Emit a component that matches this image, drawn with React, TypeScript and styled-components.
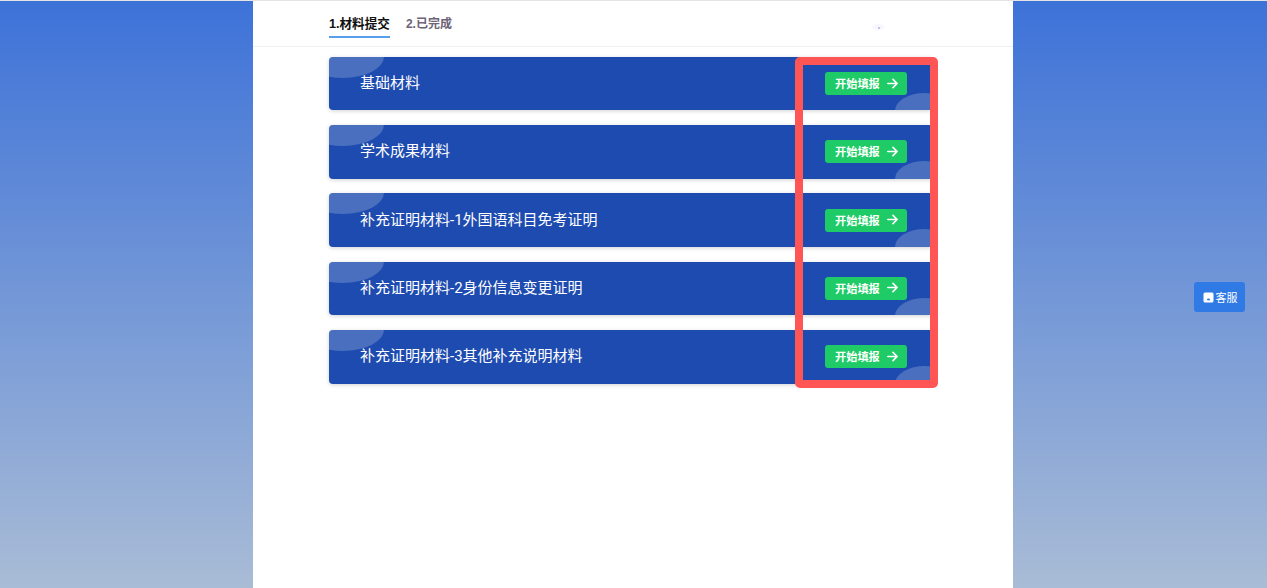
import React from "react";
import styled, { createGlobalStyle } from "styled-components";

const GlobalStyle = createGlobalStyle`
  html, body {
    margin: 0;
    padding: 0;
    height: 100%;
    overflow: hidden;
  }
  #root {
    height: 100%;
  }
`;

const Screen = styled.div`
  position: relative;
  height: 588px;
  box-sizing: border-box;
  border-top: 1px solid #e4e4e4;
  padding-left: 253px;
  background: linear-gradient(180deg, #3d72d8 0%, #a9bcd6 100%);
  font-family: "Liberation Sans", "Noto Sans CJK SC", sans-serif;
  display: flex;
`;

const Page = styled.main`
  width: 760px;
  height: 100%;
  background: #fff;
`;

const Header = styled.header`
  height: 46px;
  box-sizing: border-box;
  padding-left: 76px;
  border-bottom: 1px solid #f0f0f0;
  display: flex;
  gap: 16px;
  position: relative;
`;

const Tab = styled.div<{ $active?: boolean }>`
  height: 37px;
  box-sizing: border-box;
  padding-top: 14px;
  font-size: ${(p) => (p.$active ? "12.6px" : "12px")};
  line-height: 18px;
  font-weight: 700;
  color: ${(p) => (p.$active ? "#111" : "#6c6377")};
  border-bottom: 2px solid ${(p) => (p.$active ? "#5a9fee" : "transparent")};
`;

const Speck = styled.span`
  position: absolute;
  left: 619px;
  top: 23px;
  width: 12px;
  height: 6px;
  border-radius: 50%;
  background: #f9f6fe;

  &::after {
    content: "";
    position: absolute;
    left: 6px;
    top: 3px;
    width: 2px;
    height: 2px;
    background: #b9c6f2;
  }
`;

const List = styled.div`
  position: relative;
  width: 604px;
  margin: 9.8px 0 0 76px;
  display: flex;
  flex-direction: column;
  gap: 14.7px;
`;

const Card = styled.section`
  position: relative;
  overflow: hidden;
  height: 53.6px;
  box-sizing: border-box;
  padding: 0 26px 0 31px;
  border-radius: 4px;
  background: #1e4baf;
  box-shadow: 0 1px 4px rgba(0, 0, 0, 0.18);
  display: flex;
  align-items: center;
  justify-content: space-between;

  &::before {
    content: "";
    position: absolute;
    left: -27px;
    top: -22px;
    width: 82px;
    height: 43px;
    border-radius: 50%;
    background: rgba(255, 255, 255, 0.2);
  }

  &::after {
    content: "";
    position: absolute;
    right: -22px;
    top: 36px;
    width: 60px;
    height: 36px;
    border-radius: 50%;
    background: rgba(255, 255, 255, 0.2);
  }
`;

const CardTitle = styled.h3`
  margin: 0 0 1px;
  font-family: Roboto, "Noto Sans CJK SC", sans-serif;
  font-size: 15px;
  line-height: 20px;
  font-weight: 400;
  color: #fff;
`;

const StartButton = styled.button`
  position: relative;
  z-index: 1;
  width: 82px;
  height: 23px;
  padding: 0 0 1px 10px;
  border: 0;
  border-radius: 3px;
  background: #1ecb66;
  color: #fff;
  font-family: inherit;
  font-size: 11.2px;
  font-weight: 700;
  display: flex;
  align-items: center;
  gap: 6px;
`;

const ArrowIcon = styled.svg`
  width: 13px;
  height: 13px;
  fill: none;
  stroke: #fff;
  stroke-width: 1.8;
  stroke-linecap: round;
  stroke-linejoin: round;
`;

const Highlight = styled.div`
  position: absolute;
  left: 466px;
  top: 0;
  width: 143px;
  height: 331px;
  box-sizing: border-box;
  border: 8px solid #ff5555;
  border-radius: 5px;
  pointer-events: none;
`;

const ServiceButton = styled.button`
  position: absolute;
  left: 1193.5px;
  top: 281px;
  width: 51.5px;
  height: 30px;
  padding: 0 0 0 9px;
  border: 0;
  border-radius: 3px;
  background: #2f7ae5;
  color: #fff;
  font-family: inherit;
  font-size: 11px;
  display: flex;
  align-items: center;
  gap: 2px;
`;

const ServiceIcon = styled.svg`
  width: 11px;
  height: 11px;
  flex: none;
`;

const materials = [
  "基础材料",
  "学术成果材料",
  "补充证明材料-1外国语科目免考证明",
  "补充证明材料-2身份信息变更证明",
  "补充证明材料-3其他补充说明材料",
];

export default function App() {
  return (
    <>
      <GlobalStyle />
      <Screen>
        <Page>
          <Header>
            <Tab $active>1.材料提交</Tab>
            <Tab>2.已完成</Tab>
            <Speck />
          </Header>
          <List>
            {materials.map((name) => (
              <Card key={name}>
                <CardTitle>{name}</CardTitle>
                <StartButton>
                  开始填报
                  <ArrowIcon viewBox="0 0 14 14">
                    <path d="M2 7h10M7.5 2.5 12 7l-4.5 4.5" />
                  </ArrowIcon>
                </StartButton>
              </Card>
            ))}
            <Highlight />
          </List>
        </Page>
        <ServiceButton>
          <ServiceIcon viewBox="0 0 11 11">
            <path
              d="M2 .5h7A1.5 1.5 0 0 1 10.5 2v7A1.5 1.5 0 0 1 9 10.5H2A1.5 1.5 0 0 1 .5 9V2A1.5 1.5 0 0 1 2 .5Z"
              fill="#fff"
            />
            <ellipse cx="5.5" cy="7.4" rx="1.6" ry="1" fill="#2f7ae5" />
          </ServiceIcon>
          客服
        </ServiceButton>
      </Screen>
    </>
  );
}
